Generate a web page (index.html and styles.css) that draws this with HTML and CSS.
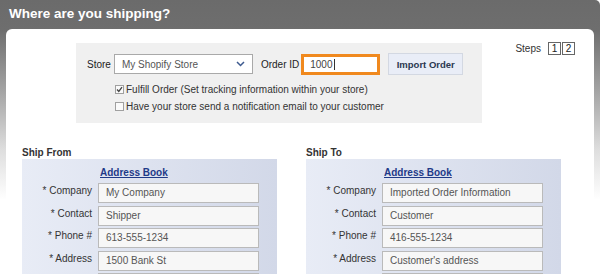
FILE: index.html
```html
<!DOCTYPE html>
<html lang="en">
<head>
<meta charset="utf-8">
<title>Where are you shipping?</title>
<link rel="stylesheet" href="styles.css">
</head>
<body>
<div class="frame">
  <h1 class="title">Where are you shipping?</h1>
  <div class="panel">
    <div class="top">
      <form class="importbox">
        <div class="row1">
          <span class="lbl">Store</span>
          <span class="selwrap">My Shopify Store<svg class="chev" width="9" height="6" viewBox="0 0 9 6"><polyline points="1,1 4.5,4.5 8,1" fill="none" stroke="#3d5a8f" stroke-width="1.5"/></svg></span>
          <span class="lbl oid">Order ID</span>
          <span class="orderid">1000<span class="caret"></span></span>
          <button type="button" class="btn">Import Order</button>
        </div>
        <div class="checks">
          <div class="check"><span class="cb"><svg width="7" height="7" viewBox="0 0 7 7"><polyline points="1,3.5 2.8,5.5 6,1.2" fill="none" stroke="#444" stroke-width="1.3"/></svg></span>Fulfill Order (Set tracking information within your store)</div>
          <div class="check"><span class="cb"></span>Have your store send a notification email to your customer</div>
        </div>
      </form>
      <div class="steps">Steps <span class="step first">1</span><span class="step">2</span></div>
    </div>
    <div class="ship">
      <section class="col">
        <h2>Ship From</h2>
        <div class="addr">
          <a class="book" href="#">Address Book</a>
          <div class="grid">
            <label>* Company</label><span class="inp">My Company</span>
            <label>* Contact</label><span class="inp">Shipper</span>
            <label>* Phone #</label><span class="inp">613-555-1234</span>
            <label>* Address</label><span class="inp">1500 Bank St</span>
            <label>&nbsp;</label><span class="inp"></span>
          </div>
        </div>
      </section>
      <section class="col">
        <h2>Ship To</h2>
        <div class="addr">
          <a class="book" href="#">Address Book</a>
          <div class="grid">
            <label>* Company</label><span class="inp">Imported Order Information</span>
            <label>* Contact</label><span class="inp">Customer</span>
            <label>* Phone #</label><span class="inp">416-555-1234</span>
            <label>* Address</label><span class="inp">Customer's address</span>
            <label>&nbsp;</label><span class="inp"></span>
          </div>
        </div>
      </section>
    </div>
  </div>
</div>
</body>
</html>
```
FILE: styles.css
```css
* { box-sizing: border-box; }
html, body { margin: 0; height: 100%; overflow: hidden; background: #fff; }
body { font-family: "Liberation Sans", Arial, sans-serif; font-size: 10px; color: #333; }

.frame {
  height: 274px;
  overflow: hidden;
  padding: 0 6px;
  background: linear-gradient(to bottom, #6b6b6b 0, #6e6e6e 30px, #a3a3a3 90px, #dedede 150px, #fff 200px);
  border-top-right-radius: 5px;
}
.title {
  margin: 0;
  height: 29px;
  padding: 6px 0 0 3px;
  font-size: 13.5px;
  line-height: 16px;
  font-weight: bold;
  color: #fff;
}
.panel {
  background: #fff;
  border-radius: 6px 6px 0 0;
  height: 245px;
  overflow: hidden;
}
.top { display: flex; align-items: flex-start; }
.importbox {
  margin: 14px 0 0 70px;
  width: 406px;
  height: 80px;
  background: #f0f0f0;
  padding: 10px 0 0 11px;
}
.row1 { display: flex; align-items: center; height: 22px; }
.lbl { color: #222; }
.selwrap {
  position: relative;
  margin-left: 3px;
  width: 139px;
  height: 20px;
  border: 1px solid #a9a9a9;
  background: #fff;
  display: flex;
  align-items: center;
  padding-left: 7px;
  color: #555;
}
.chev { position: absolute; right: 7px; top: 6px; }
.oid { margin-left: 8px; }
.orderid {
  margin-left: 2px;
  width: 79px;
  height: 21px;
  border: 3px solid #f0891e;
  background: #fff;
  padding-left: 6px;
  display: flex;
  align-items: center;
  color: #444;
}
.caret { width: 1px; height: 11px; background: #333; margin-left: 1px; }
.btn {
  margin-left: 8px;
  width: 75px;
  height: 22px;
  border: 1px solid #d3d8e2;
  background: #e9edf7;
  font: bold 9.5px "Liberation Sans", Arial, sans-serif;
  color: #2b3850;
  padding: 0;
}
.checks { margin-top: 7px; display: flex; flex-direction: column; gap: 3px; }
.check { display: flex; align-items: center; height: 14px; padding-left: 28px; color: #333; }
.cb {
  width: 9px;
  height: 9px;
  border: 1px solid #a0a0a0;
  background: #fafafa;
  margin-right: 2px;
  display: flex;
  align-items: center;
  justify-content: center;
}
.steps {
  margin: 13px 19px 0 auto;
  display: flex;
  align-items: center;
  color: #333;
}
.step {
  width: 13px;
  height: 13px;
  border: 1px solid #666;
  text-align: center;
  line-height: 11px;
  margin-left: 1px;
  color: #222;
}
.step.first { margin-left: 7px; }

.ship { display: flex; gap: 29px; padding-left: 16px; margin-top: 24px; }
.col { width: 255px; }
.col h2 { margin: 0; font-size: 10px; line-height: 12px; font-weight: bold; color: #333; }
.addr {
  background: linear-gradient(to right, #e8ecf6, #d2d8e8);
  padding: 7px 18px 0 0;
  height: 200px;
}
.book {
  display: block;
  margin-left: 78px;
  font-weight: bold;
  color: #1f3a88;
  text-decoration: underline;
  line-height: 14px;
}
.grid {
  margin-top: 3px;
  display: grid;
  grid-template-columns: 70px 161px;
  column-gap: 6px;
  grid-auto-rows: 20px;
  row-gap: 2.5px;
}
.grid label { text-align: right; padding-top: 1px; line-height: 14px; color: #333; }
.inp {
  border: 1px solid #bababa;
  background: #f7f7f7;
  padding-left: 7px;
  line-height: 18px;
  color: #555;
}
```
